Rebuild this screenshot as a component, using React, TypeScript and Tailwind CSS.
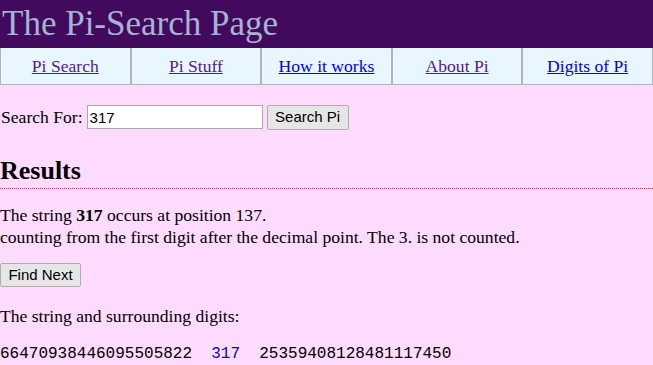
const navLinks = [
  { label: "Pi Search", visited: true },
  { label: "Pi Stuff", visited: true },
  { label: "How it works", visited: false },
  { label: "About Pi", visited: true },
  { label: "Digits of Pi", visited: false },
];

export default function App() {
  return (
    <div className="min-h-[365px] bg-[#ffdcff] font-['Liberation_Serif',serif] text-[17.6px] text-black">
      <div className="h-[48px] bg-[#420a5c] pl-[2px] pt-[3px]">
        <h1 className="text-[35px] leading-[42px] text-[#a7b3d3]">The Pi-Search Page</h1>
      </div>

      <div className="flex h-[37px] border border-t-0 border-[#b4b4b4] bg-[#e8f6ff]">
        {navLinks.map((l, i) => (
          <div
            key={l.label}
            className={`flex flex-1 items-center justify-center ${i > 0 ? "border-l-2 border-[#b4b4b4]" : ""}`}
          >
            <a href="#" className={`underline ${l.visited ? "text-[#551a8b]" : "text-[#0000ee]"}`}>
              {l.label}
            </a>
          </div>
        ))}
      </div>

      <div className="flex items-center pt-[19px]">
        <span className="pl-[1px]">Search For:</span>
        <input
          defaultValue="317"
          className="ml-[4px] h-[24px] w-[176px] border border-[#a9a9a9] bg-white px-[2px] font-['Liberation_Sans',sans-serif] text-[15px] outline-none"
        />
        <button className="ml-[4px] h-[25px] w-[82px] rounded-[2px] border border-[#adadad] bg-[#e6e6e6] font-['Liberation_Sans',sans-serif] text-[15px]">
          Search Pi
        </button>
      </div>

      <h2 className="mt-[26px] border-b border-dotted border-[#ff3366] pb-[2px] text-[26px] font-bold leading-[30px]">
        Results
      </h2>

      <p className="mt-[15px] leading-[22px]">
        The string <b>317</b> occurs at position 137.
        <br />
        counting from the first digit after the decimal point. The 3. is not counted.
      </p>

      <button className="mt-[15px] h-[24px] w-[81px] rounded-[2px] border border-[#adadad] bg-[#e6e6e6] font-['Liberation_Sans',sans-serif] text-[15px]">
        Find Next
      </button>

      <p className="mt-[17px] leading-[22px]">The string and surrounding digits:</p>

      <pre className="mt-[17px] font-['Liberation_Mono',monospace] text-[16px] leading-[20px]">
        66470938446095505822{"  "}
        <span className="text-[#0a0aa0]">317</span>
        {"  "}25359408128481117450
      </pre>
    </div>
  );
}
